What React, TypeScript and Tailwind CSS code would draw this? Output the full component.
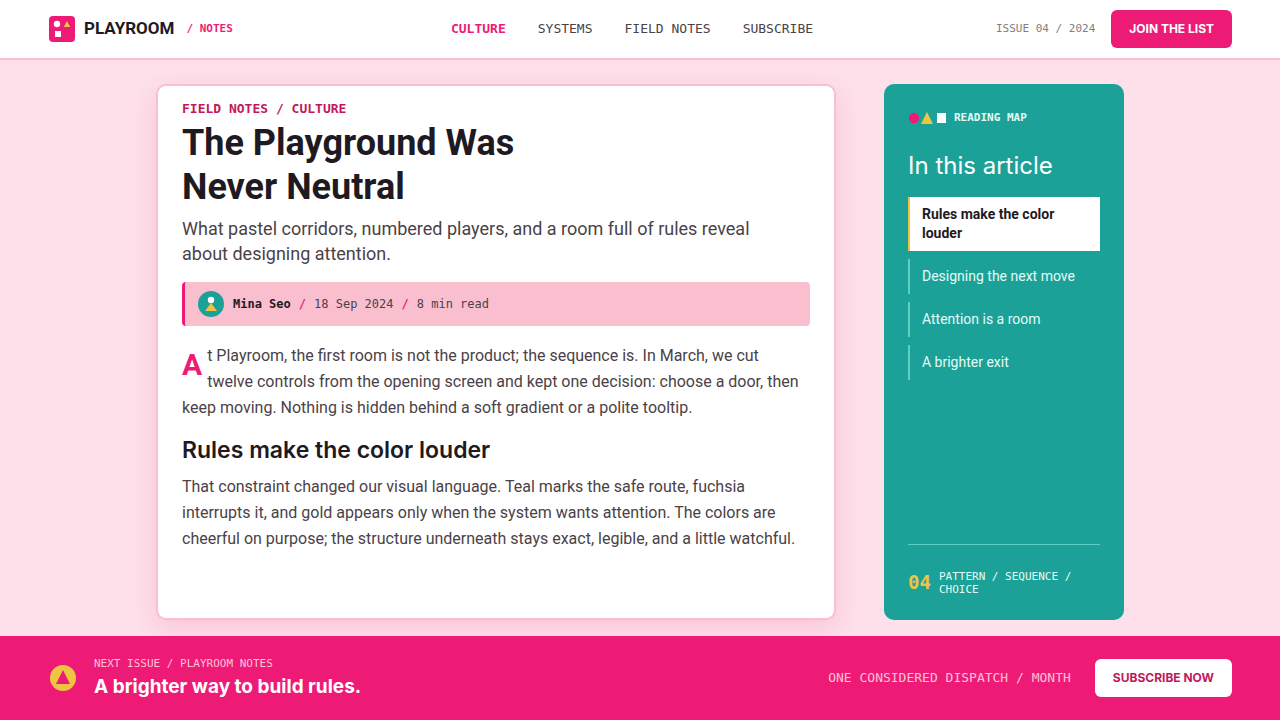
type NavItem = { label: string; active?: boolean };

const NAV: NavItem[] = [
  { label: "CULTURE", active: true },
  { label: "SYSTEMS" },
  { label: "FIELD NOTES" },
  { label: "SUBSCRIBE" },
];

const SECTIONS: NavItem[] = [
  { label: "Rules make the color louder", active: true },
  { label: "Designing the next move" },
  { label: "Attention is a room" },
  { label: "A brighter exit" },
];

const Logo = () => (
  <svg className="w-7 h-7 shrink-0" viewBox="0 0 28 28" aria-hidden="true">
    <rect x="1" y="1" width="26" height="26" rx="4" fill="#ed1b76" />
    <circle cx="9" cy="9" r="3.2" fill="#fff" />
    <path d="M19 6l3.2 6h-6.4z" fill="#efc443" />
    <rect x="7" y="16" width="6" height="6" fill="#fff" />
  </svg>
);

const Header = () => (
  <header className="flex items-center h-[60px] px-12 bg-white border-b-2 border-[#f9bfcf]">
    <div className="flex flex-1 items-center">
      <a href="#" className="flex items-center gap-2 font-[Roboto,sans-serif] text-[17px] font-bold text-[#1f1a22]">
        <Logo />
        PLAYROOM
      </a>
      <span className="ml-3 font-['DejaVu_Sans_Mono',monospace] text-[11px] font-bold text-[#ed1b76]">
        / NOTES
      </span>
    </div>
    <nav className="flex gap-8 mr-4 font-['DejaVu_Sans_Mono',monospace] text-[13px]">
      {NAV.map((item) => (
        <a
          key={item.label}
          href="#"
          className={item.active ? "font-bold text-[#ed1b76]" : "text-[#4a4248]"}
        >
          {item.label}
        </a>
      ))}
    </nav>
    <div className="flex flex-1 justify-end items-center gap-4">
      <span className="font-['DejaVu_Sans_Mono',monospace] text-[11px] text-[#857b82]">
        ISSUE 04 / 2024
      </span>
      <button
        type="button"
        className="h-[38px] px-[18px] rounded-md bg-[#ed1b76] text-[12px] font-bold text-white cursor-pointer"
      >
        JOIN THE LIST
      </button>
    </div>
  </header>
);

const Byline = () => (
  <div className="flex items-center gap-2 h-11 mt-4 px-3 rounded-[4px] border-l-3 border-[#ed1b76] bg-[#f9bfcf] font-['DejaVu_Sans_Mono',monospace] text-[12px] text-[#4a4248]">
    <svg className="w-7 h-7 shrink-0" viewBox="0 0 28 28" aria-hidden="true">
      <circle cx="14" cy="14" r="13" fill="#1ca198" />
      <path d="M14 13l6 8H8z" fill="#efc443" />
      <circle cx="14" cy="10" r="3.2" fill="#fff" />
    </svg>
    <strong className="font-bold text-[#1f1a22]">Mina Seo</strong>
    <b className="font-bold text-[#ed1b76]">/</b>
    <span>18 Sep 2024</span>
    <b className="font-bold text-[#ed1b76]">/</b>
    <span>8 min read</span>
  </div>
);

const Article = () => (
  <article className="flex-1 min-w-0 px-6 pt-[14px] pb-6 rounded-[10px] border-2 border-[#f9bfcf] bg-white shadow-[0_8px_24px_rgba(237,27,118,0.14)]">
    <p className="font-['DejaVu_Sans_Mono',monospace] text-[13px] leading-[18px] font-bold text-[#c2185b]">
      FIELD NOTES / CULTURE
    </p>
    <h1 className="mt-[3px] font-[Roboto,sans-serif] text-[36px] leading-[44px] font-bold text-[#1f1a22]">
      The Playground Was
      <br />
      Never Neutral
    </h1>
    <p className="mt-[7px] font-[Roboto,sans-serif] text-[18px] leading-[25px] text-[#4a4248]">
      What pastel corridors, numbered players, and a room full of rules reveal
      <br />
      about designing attention.
    </p>
    <Byline />
    <p className="mt-[17px] font-[Roboto,sans-serif] text-[16px] leading-[26px] text-[#4a4248]">
      <span className="float-left pr-[5px] text-[30px] leading-[44px] font-bold text-[#ed1b76]">A</span>
      t Playroom, the first room is not the product; the sequence is. In March, we cut
      <br />
      twelve controls from the opening screen and kept one decision: choose a door, then
      <br />
      keep moving. Nothing is hidden behind a soft gradient or a polite tooltip.
    </p>
    <h2 className="mt-[15px] text-[23px] leading-[29px] font-semibold text-[#1f1a22]">
      Rules make the color louder
    </h2>
    <p className="mt-[9px] font-[Roboto,sans-serif] text-[16px] leading-[26px] text-[#4a4248]">
      That constraint changed our visual language. Teal marks the safe route, fuchsia
      <br />
      interrupts it, and gold appears only when the system wants attention. The colors are
      <br />
      cheerful on purpose; the structure underneath stays exact, legible, and a little watchful.
    </p>
  </article>
);

const ReadingMap = () => (
  <aside className="flex flex-col w-60 shrink-0 p-6 rounded-[10px] bg-[#1ca198] text-white">
    <div className="flex items-center gap-2 h-5 font-['DejaVu_Sans_Mono',monospace] text-[11px] font-bold text-[#e3fbf6]">
      <svg className="w-[38px] h-3" viewBox="0 0 38 12" aria-hidden="true">
        <circle cx="6" cy="6" r="5.2" fill="#ed1b76" />
        <path d="M19 0l6 12H13z" fill="#efc443" />
        <rect x="29" y="1" width="9" height="10" fill="#fff" />
      </svg>
      READING MAP
    </div>
    <h2 className="mt-[23px] text-[24px] leading-[30px]">In this article</h2>
    <nav className="flex flex-col gap-2 mt-4 font-[Roboto,sans-serif] text-[14px] leading-[19px]">
      {SECTIONS.map((s) => (
        <a
          key={s.label}
          href="#"
          className={
            s.active
              ? "px-3 py-2 border-l-2 border-[#efc443] bg-white font-bold text-[#1f1a22]"
              : "px-3 py-2 border-l-2 border-[#5cd0c3] text-[#e3fbf6]"
          }
        >
          {s.label}
        </a>
      ))}
    </nav>
    <div className="flex items-center gap-2 mt-auto pt-6 border-t border-[#5cd0c3] font-['DejaVu_Sans_Mono',monospace]">
      <strong className="text-[19px] leading-[27px] font-bold text-[#efc443]">04</strong>
      <span className="text-[11px] leading-[13px] text-[#e3fbf6]">PATTERN / SEQUENCE / CHOICE</span>
    </div>
  </aside>
);

const Footer = () => (
  <footer className="flex justify-between items-center h-[84px] px-12 bg-[#ed1b76] text-white">
    <div className="flex items-center gap-4">
      <svg className="w-[30px] h-[30px] shrink-0" viewBox="0 0 30 30" aria-hidden="true">
        <circle cx="15" cy="15" r="13" fill="#efc443" />
        <path d="M15 7l7 14H8z" fill="#ed1b76" />
      </svg>
      <div>
        <p className="font-['DejaVu_Sans_Mono',monospace] text-[11px] leading-4 text-[#fcc3d7]">
          NEXT ISSUE / PLAYROOM NOTES
        </p>
        <p className="text-[19px] leading-[29px] font-bold">A brighter way to build rules.</p>
      </div>
    </div>
    <div className="flex items-center gap-6">
      <span className="font-['DejaVu_Sans_Mono',monospace] text-[13px] text-[#fcc3d7]">
        ONE CONSIDERED DISPATCH / MONTH
      </span>
      <button
        type="button"
        className="h-[38px] px-[18px] rounded-md bg-white text-[12px] font-bold text-[#c2185b] cursor-pointer"
      >
        SUBSCRIBE NOW
      </button>
    </div>
  </footer>
);

const App = () => (
  <div className="flex flex-col min-h-screen bg-[#fde0e9] font-[Inter,sans-serif]">
    <Header />
    <main className="flex flex-1 gap-12 w-full max-w-[968px] mx-auto pt-6 pb-4">
      <Article />
      <ReadingMap />
    </main>
    <Footer />
  </div>
);

export default App;
